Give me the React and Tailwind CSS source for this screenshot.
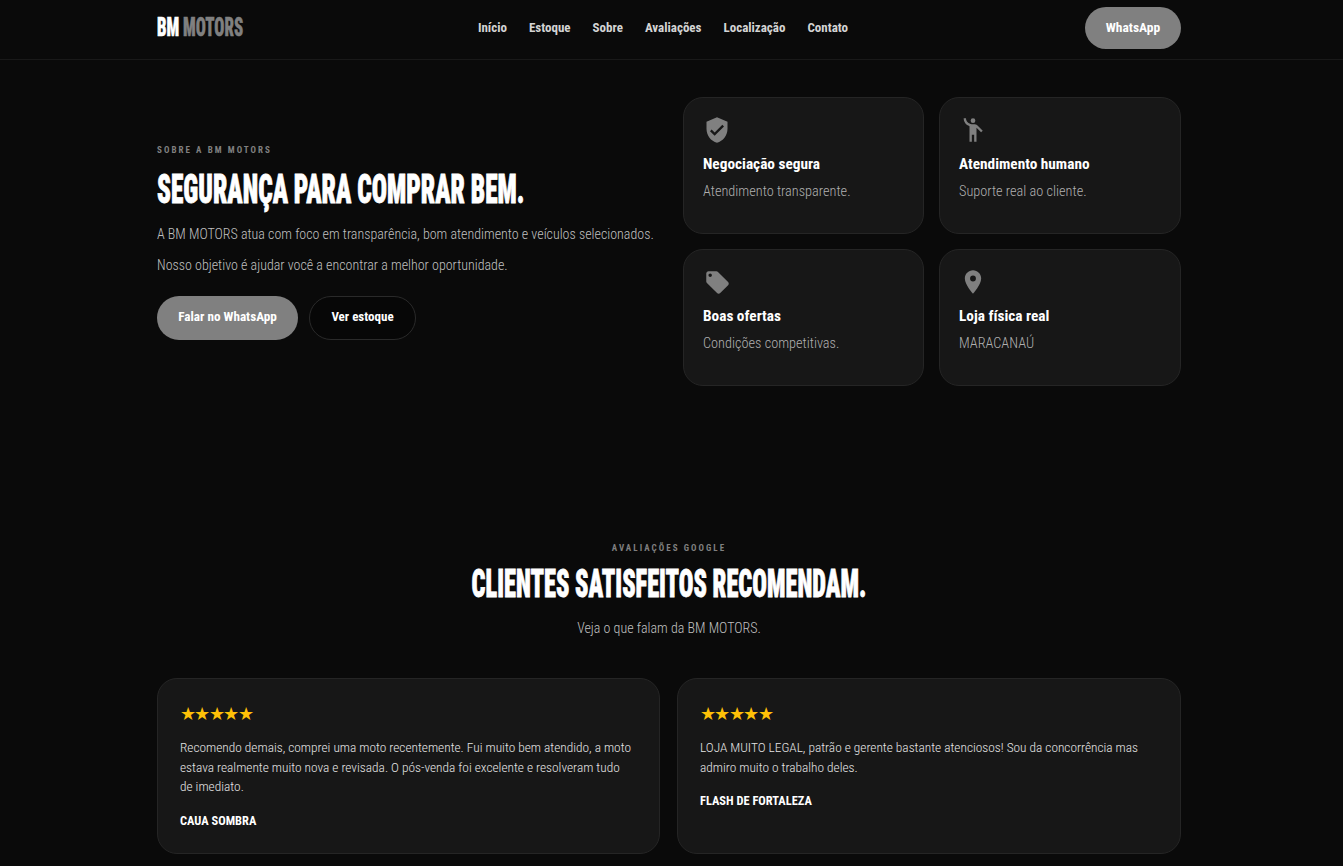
import React from "react";
import { MdVerifiedUser, MdEmojiPeople, MdLocalOffer, MdLocationOn } from "react-icons/md";

const features = [
  { Icon: MdVerifiedUser, size: "h-7 w-7", title: "Negociação segura", text: "Atendimento transparente." },
  { Icon: MdEmojiPeople, size: "h-7 w-7", title: "Atendimento humano", text: "Suporte real ao cliente." },
  { Icon: MdLocalOffer, size: "ml-px h-[27px] w-[27px]", title: "Boas ofertas", text: "Condições competitivas." },
  { Icon: MdLocationOn, size: "h-7 w-7", title: "Loja física real", text: "MARACANAÚ" },
];

function Feature({ Icon, size, title, text }) {
  return (
    <div className="h-[137px] rounded-[20px] border border-[#252525] bg-[#171717] px-[19px] pt-[18px]">
      <div className="flex h-7 items-center">
        <Icon className={`${size} text-[#808080]`} />
      </div>
      <h3 className="mt-[10px] text-[15.3px] leading-[20px] font-bold text-white">{title}</h3>
      <p className="mt-[7px] text-[14.3px] leading-[20px] font-light text-[#b0b0b0]">{text}</p>
    </div>
  );
}

function Review({ lines, name }) {
  return (
    <div className="h-[176px] rounded-[20px] border border-[#252525] bg-[#171717] pt-[25px] pr-[25px] pl-[22px]">
      <div className="text-[18px] leading-[20px] tracking-[-1.6px] text-[#ffc107]">★★★★★</div>
      <p className="mt-[14px] text-[13.35px] leading-[19.6px] font-light text-[#e5e5e5]">{lines}</p>
      <p className="mt-[15px] text-[12.4px] leading-[18px] font-bold text-white">{name}</p>
    </div>
  );
}

export default function App() {
  return (
    <div className="min-h-[866px] bg-[#0a0a0a] font-['Roboto_Condensed','Roboto',sans-serif]">
      <div className="pr-[5px] pb-[40px]">
        <header className="-mr-[5px] border-b border-[#191919] pr-[5px]">
          <div className="mx-auto flex h-[59px] w-[1024px] items-center justify-between pb-[4px]">
            <div className="w-[86px]">
              <div className="origin-left scale-x-[0.67] text-[25px] leading-none font-black whitespace-nowrap [-webkit-text-stroke:0.5px_currentColor]">
                <span className="text-white">BM</span> <span className="text-[#808080]">MOTORS</span>
              </div>
            </div>
            <nav className="-ml-[2px] flex gap-[22px] text-[13px] font-bold text-[#d4d4d4]">
              {["Início", "Estoque", "Sobre", "Avaliações", "Localização", "Contato"].map((n) => (
                <span key={n}>{n}</span>
              ))}
            </nav>
            <button className="h-[42px] w-[96px] rounded-full bg-[#808080] text-[13.5px] font-bold text-white">WhatsApp</button>
          </div>
        </header>

        <section className="mx-auto mt-[37px] grid w-[1024px] grid-cols-[502px_498px] items-center gap-[24px]">
          <div>
            <p className="text-[9px] leading-[12px] font-bold tracking-[2.05px] text-[#808080]">SOBRE A BM MOTORS</p>
            <h1 className="mt-[11px] origin-left scale-x-[0.634] text-[40px] leading-[46px] font-black whitespace-nowrap text-white [-webkit-text-stroke:0.8px_white]">SEGURANÇA PARA COMPRAR BEM.</h1>
            <p className="mt-[11px] text-[14px] leading-[20px] font-light whitespace-nowrap text-[#c0c0c0]">A BM MOTORS atua com foco em transparência, bom atendimento e veículos selecionados.</p>
            <p className="mt-[11px] text-[14px] leading-[20px] font-light whitespace-nowrap text-[#c0c0c0]">Nosso objetivo é ajudar você a encontrar a melhor oportunidade.</p>
            <div className="mt-[21px] flex gap-[11px]">
              <button className="h-[44px] w-[141px] rounded-full bg-[#808080] pb-[2px] text-[13.2px] font-bold text-white">Falar no WhatsApp</button>
              <button className="h-[44px] w-[107px] rounded-full border border-[#2a2a2a] bg-[#070707] pb-[2px] text-[13px] font-bold text-white">Ver estoque</button>
            </div>
          </div>
          <div className="grid grid-cols-[241px_242px] gap-[15px]">
            {features.map((f) => (
              <Feature key={f.title} {...f} />
            ))}
          </div>
        </section>

        <section className="mx-auto mt-[156px] w-[1024px]">
          <p className="text-center text-[9px] leading-[12px] font-bold tracking-[2.05px] text-[#808080]">AVALIAÇÕES GOOGLE</p>
          <h2 className="mt-[10px] scale-x-[0.642] text-center text-[38px] leading-[40px] font-black whitespace-nowrap text-white [-webkit-text-stroke:0.8px_white]">CLIENTES SATISFEITOS RECOMENDAM.</h2>
          <p className="mt-[14px] text-center text-[14px] leading-[20px] font-light text-[#c0c0c0]">Veja o que falam da BM MOTORS.</p>
          <div className="mt-[40px] grid grid-cols-[503px_504px] gap-[17px]">
            <Review
              lines="Recomendo demais, comprei uma moto recentemente. Fui muito bem atendido, a moto estava realmente muito nova e revisada. O pós-venda foi excelente e resolveram tudo de imediato."
              name="CAUA SOMBRA"
            />
            <Review
              lines="LOJA MUITO LEGAL, patrão e gerente bastante atenciosos! Sou da concorrência mas admiro muito o trabalho deles."
              name="FLASH DE FORTALEZA"
            />
          </div>
        </section>
      </div>
    </div>
  );
}
